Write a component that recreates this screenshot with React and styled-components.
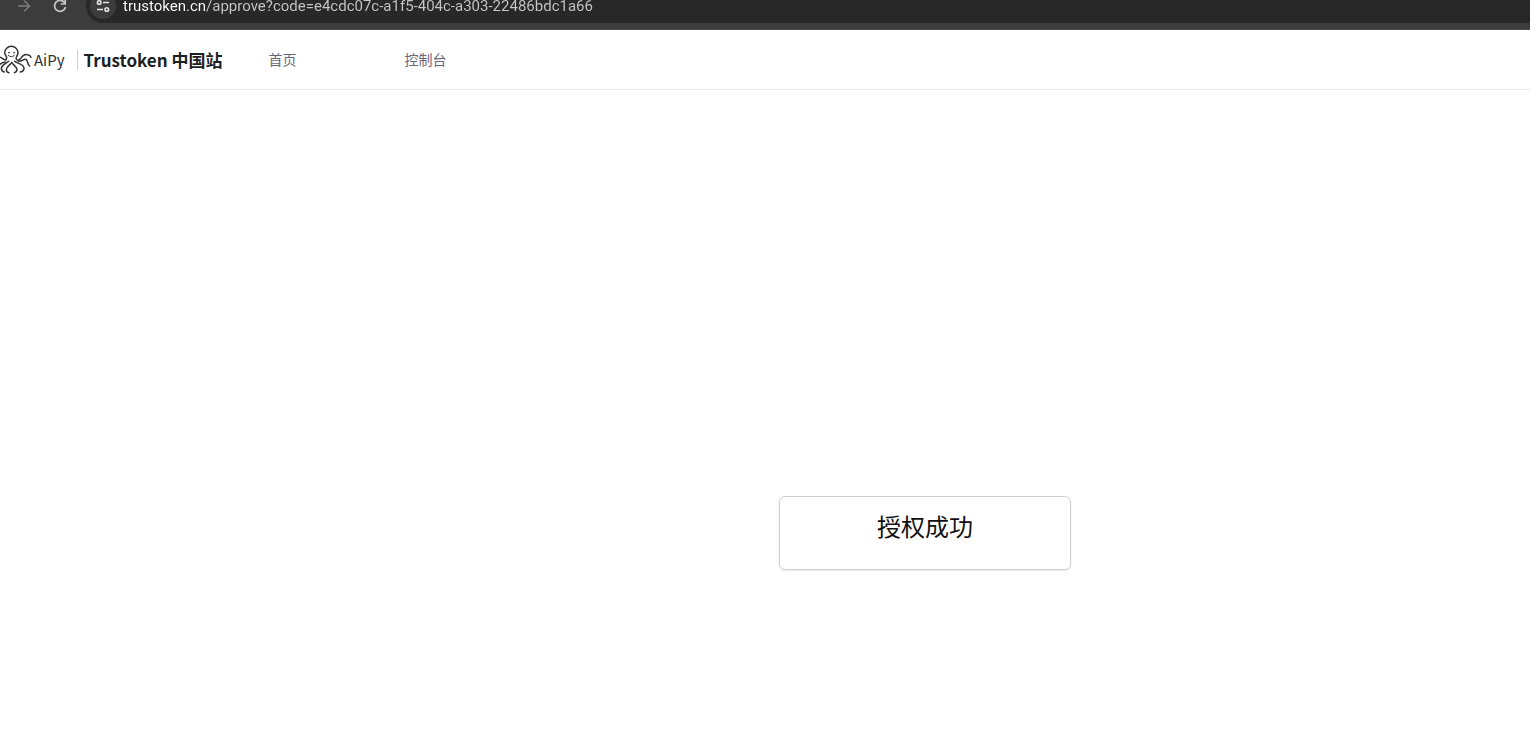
import React from 'react';
import styled, { createGlobalStyle } from 'styled-components'

function BrowserBar() {
    return (
        <Toolbar>
            <ToolButton aria-label="Forward" disabled>
                <svg width="16" height="16" viewBox="0 0 16 16" fill="none" stroke="#7d7d7d" strokeWidth="1.5">
                    <path d="M2 8h11M8 2.500L13.500 8 8 13.500" />
                </svg>
            </ToolButton>
            <ToolButton aria-label="Reload">
                <svg width="16" height="16" viewBox="0 0 16 16" fill="none" stroke="#c7c7c7" strokeWidth="1.700">
                    <path d="M12.800 5A5.500 5.500 0 1 0 13.500 9" />
                    <path d="M13.200 1.500v4.500H8.700" />
                </svg>
            </ToolButton>
            <AddressBar>
                <SiteButton aria-label="View site information">
                    <svg width="14" height="14" viewBox="0 0 14 14" fill="none" stroke="#e3e3e3" strokeWidth="1.600">
                        <circle cx="3.200" cy="3.500" r="1.800" />
                        <path d="M7 3.500h6M1 10.500h6" />
                        <circle cx="10.800" cy="10.500" r="1.800" />
                    </svg>
                </SiteButton>
                <Address
                    type="text"
                    aria-label="Address"
                    spellCheck="false"
                    defaultValue="trustoken.cn/approve?code=e4cdc07c-a1f5-404c-a303-22486bdc1a66"
                />
            </AddressBar>
        </Toolbar>
    )
}

function Octopus() {
    return (
        <svg width="32" height="30" viewBox="0 27 96 90" fill="none" stroke="#333" strokeWidth="4.500" strokeLinecap="round">
            <path d="M18 71C25 63 14 58 14 50a20 19 0 0 1 40 0c0 9-9 14-5 20 4 5 10 2 15-5 5-8 12-11 19-9 6 1 9 4 10 8" />
            <path d="M25 58q9 9 18 0" strokeWidth="3" />
            <circle cx="27" cy="50" r="1.500" fill="#333" strokeWidth="2" />
            <circle cx="42" cy="50" r="1.500" fill="#333" strokeWidth="2" />
            <path d="M55 76c13 1 14-8 22-6 8 2 3 14 12 20" />
            <path d="M44 76c7 6 27 8 28 20 0 7-5 11-11 12" />
            <path d="M35 80c-6 8-16 12-16 21 0 5 3 8 8 9" />
            <path d="M35 80c6 8 16 13 16 20s-3 9-8 10" />
            <path d="M26 76C18 84 4 86 4 97c0 6 3 10 9 11" />
            <path d="M18 71C11 73 7 65 0 64" />
            <path d="M16 78c-7 1-12 3-16 7" />
        </svg>
    )
}

function SiteHeader() {
    return (
        <Header>
            <Brand href="/">
                <Octopus />
                <BrandName>AiPy</BrandName>
                <SiteName>Trustoken 中国站</SiteName>
            </Brand>
            <Nav>
                <NavLink href="/">首页</NavLink>
                <NavLink href="/console">控制台</NavLink>
            </Nav>
        </Header>
    )
}

function App() {
    return (
        <>
            <GlobalStyle />
            <BrowserBar />
            <SiteHeader />
            <Main>
                <Card>
                    <Message>授权成功</Message>
                </Card>
            </Main>
        </>
    )
}

export default App


const GlobalStyle = createGlobalStyle`
    * {
        box-sizing: border-box;
    }
    body {
        margin: 0;
        background-color: white;
        font-family: "Noto Sans", "Noto Sans CJK SC", sans-serif;
    }
`

const Toolbar = styled.div`
    display: flex;
    align-items: flex-end;
    height: 30px;
    padding-left: 8px;
    padding-bottom: 6px;
    overflow: hidden;
    background-color: #3c3c3c;
    border-bottom: 1px solid #4a484a;
`

const ToolButton = styled.button`
    display: flex;
    flex: none;
    align-items: center;
    justify-content: center;
    width: 32px;
    height: 34px;
    margin-right: 4px;
    padding: 0px;
    border-style: none;
    background: none;
`

const AddressBar = styled.div`
    display: flex;
    flex: 1;
    align-items: center;
    height: 34px;
    margin-left: 6px;
    padding-left: 4px;
    border-radius: 17px 0px 0px 17px;
    background-color: #282828;
`

const SiteButton = styled.button`
    display: flex;
    align-items: center;
    justify-content: center;
    width: 26px;
    height: 26px;
    margin-right: 7px;
    padding: 0px;
    border-style: none;
    border-radius: 13px;
    background-color: #3c3c3c;
`

/* the host is brighter than the rest of the address */
const Address = styled.input`
    flex: 1;
    height: 24px;
    padding: 0px;
    border-style: none;
    font-family: Roboto, sans-serif;
    font-size: 15px;
    color: #c7c7c7;
    background: linear-gradient(to right, #ffffff 83px, #c7c7c7 83px);
    background-clip: text;
    -webkit-text-fill-color: transparent;
    &:focus {
        outline: none;
    }
`

const Header = styled.header`
    display: flex;
    align-items: center;
    height: 60px;
    border-bottom: 1px solid #ebebeb;
`

const Brand = styled.a`
    display: flex;
    align-items: center;
    color: #1c1f23;
    font-family: "Noto Sans CJK SC", sans-serif;
    text-decoration: none;
`

const BrandName = styled.span`
    padding-left: 2px;
    padding-right: 12px;
    font-size: 15px;
    line-height: 20px;
    color: #333333;
`

const SiteName = styled.span`
    padding-left: 6px;
    border-left: 1px solid #cccccc;
    font-size: 17px;
    font-weight: 700;
    line-height: 20px;
    white-space: nowrap;
`

const Nav = styled.nav`
    display: flex;
    gap: 108px;
    padding-left: 46px;
`

const NavLink = styled.a`
    font-size: 14px;
    line-height: 20px;
    color: #6b6578;
    text-decoration: none;
    white-space: nowrap;
`

const Main = styled.main`
    display: flex;
    align-items: center;
    justify-content: center;
    min-height: calc(100vh - 90px);
    padding-top: 245px;
    padding-left: 320px;
`

const Card = styled.section`
    width: 292px;
    padding: 12px 24px 24px;
    border: 1px solid #d0d0d3;
    border-radius: 6px;
    box-shadow: 0px 1px 2px rgba(0, 0, 0, 0.1);
`

const Message = styled.h1`
    margin: 0px;
    font-size: 24px;
    font-weight: 400;
    line-height: 36px;
    text-align: center;
    color: #111111;
`
